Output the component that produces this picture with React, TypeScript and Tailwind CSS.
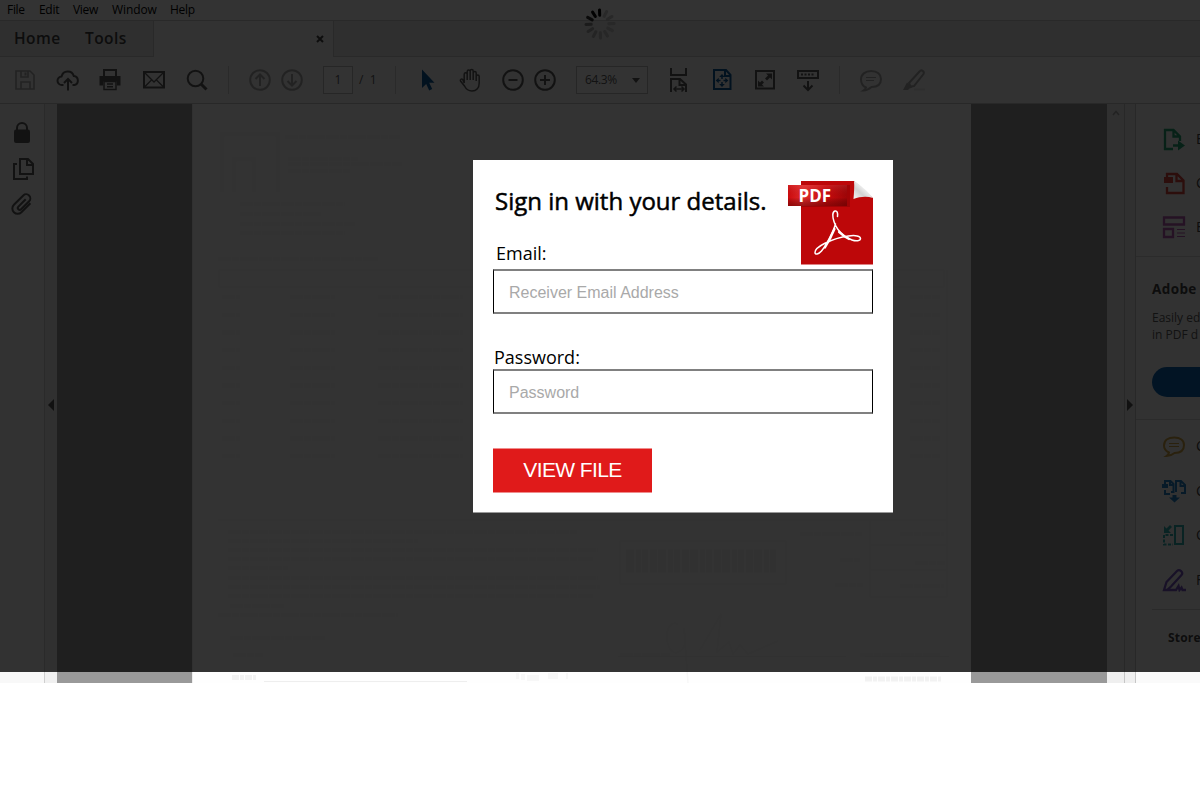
import React from "react";

type IconProps = { children: React.ReactNode; className?: string; size?: number };

function Icon({ children, className = "", size = 24 }: IconProps) {
  return (
    <svg
      width={size}
      height={size}
      viewBox="0 0 24 24"
      fill="none"
      stroke="currentColor"
      strokeWidth={2}
      className={`block shrink-0 ${className}`}
    >
      {children}
    </svg>
  );
}

function Divider() {
  return <div className="ml-[19px] h-[28px] w-px shrink-0 bg-[#cfcfcf]" />;
}

function MenuBar() {
  return (
    <div className="flex h-5 shrink-0 items-center bg-white pl-[7px] text-[12px] leading-5 tracking-[-0.3px] text-black">
      <span className="w-8">File</span>
      <span className="w-[34px]">Edit</span>
      <span className="w-[39px]">View</span>
      <span className="w-[58px] tracking-[-0.1px]">Window</span>
      <span>Help</span>
    </div>
  );
}

function TabBar() {
  return (
    <div className="flex h-[37px] shrink-0 border-t border-[#cdcdcd] bg-[#ebebeb] text-[15.500px] font-semibold text-[#444]">
      <div className="flex w-[154px] items-center border-r border-b border-[#cdcdcd] pl-[14px] tracking-[0.45px]">
        <span className="w-[71px]">Home</span>
        <span>Tools</span>
      </div>
      <div className="flex w-[180px] items-center justify-end border-r border-[#cdcdcd] bg-[#f8f8f8] pr-[9px] pb-px">
        <svg width="8" height="8" viewBox="0 0 8 8" stroke="#444" strokeWidth="2">
          <path d="M1 1l6 6M7 1L1 7" />
        </svg>
      </div>
      <div className="grow border-b border-[#cdcdcd]" />
    </div>
  );
}

function Toolbar() {
  return (
    <div className="flex h-[47px] shrink-0 items-center border-b border-[#c8c8c8] bg-[#f8f8f8] text-[#5c5c5c]">
      <Icon className="ml-[13px] text-[#aaa]">
        <path d="M3 3h14l4 4v14H3zM8 3v6h7V3M8 21v-7h9v7" strokeWidth="1.6" />
        <path d="M12.500 4.500v3" />
      </Icon>
      <Icon className="ml-[19px]">
        <path d="M7.500 17H6a4.300 4.300 0 0 1-.4-8.600A6.300 6.300 0 0 1 17.800 8a4.600 4.600 0 0 1 .7 9H16.500M12 22.500v-11M8 15l4-4 4 4" />
      </Icon>
      <Icon className="ml-[18px]">
        <path d="M6 8V2h12v6" />
        <path d="M1.500 8h21v9.500H19v-4H5v4H1.500z" fill="currentColor" stroke="none" />
        <path d="M6 13.500h12v8H6zM9 16h6M9 18.700h6" strokeWidth="1.500" />
      </Icon>
      <Icon className="ml-[20px]">
        <path d="M2 4h20v15.500H2z" />
        <path d="M2.500 4.500L12 14l9.500-9.500M2.500 19l7-7M21.500 19l-7-7" strokeWidth="1.300" />
      </Icon>
      <Icon className="ml-[19px]">
        <circle cx="10.500" cy="10.500" r="7.800" />
        <path d="M16 16l5.500 5.500" strokeWidth="3" />
      </Icon>
      <Divider />
      <Icon className="ml-[19px] text-[#aaa]">
        <circle cx="12" cy="12" r="9.800" />
        <path d="M12 18V7M7.500 11L12 6.500l4.500 4.500" />
      </Icon>
      <Icon className="ml-[8px] text-[#aaa]">
        <circle cx="12" cy="12" r="9.800" />
        <path d="M12 6v11M7.500 13l4.500 4.500 4.500-4.500" />
      </Icon>
      <div className="ml-[19px] flex h-7 w-[30px] shrink-0 items-center justify-center border border-[#bcbcbc] bg-white text-[12px]">
        1
      </div>
      <div className="ml-[6px] w-[18px] shrink-0 text-[12px] whitespace-pre">/  1</div>
      <div className="ml-[18px] h-7 w-px shrink-0 bg-[#cfcfcf]" />
      <Icon className="ml-[20px] text-[#0d5a9c]">
        <path d="M6 1.500v18.500l4.200-4 3 6.500 3-1.500-3-6.300h5.300z" fill="currentColor" stroke="none" />
      </Icon>
      <Icon className="ml-[18px]">
        <path
          d="M6.200 15V6.300a1.500 1.500 0 0 1 3 0V12 3.500a1.500 1.500 0 0 1 3 0V12 3a1.500 1.500 0 0 1 3 0v9V5a1.500 1.500 0 0 1 3 0v8-4.500a1.500 1.500 0 0 1 3 0V15c0 5-3 8-7.200 8-4 0-6-2-7.500-5l-4-5c-.8-1.500 1-2.500 2.200-1.500z"
          strokeWidth="1.500"
        />
      </Icon>
      <Icon className="ml-[19px]">
        <circle cx="12" cy="12" r="9.800" />
        <path d="M7.500 12h9" />
      </Icon>
      <Icon className="ml-[8px]">
        <circle cx="12" cy="12" r="9.800" />
        <path d="M7 12h10M12 7v10" />
      </Icon>
      <div className="ml-[19px] flex h-7 w-[72px] shrink-0 items-center justify-between border border-[#bcbcbc] bg-white pr-[7px] pl-[8px] text-[12px] tracking-[-0.4px]">
        64.3%
        <svg width="8" height="5" viewBox="0 0 8 5" fill="currentColor">
          <path d="M0 0h8L4 5z" />
        </svg>
      </div>
      <Icon className="ml-[18px]">
        <path d="M5 0v7h15V0M5 24V11h9l6 5.500V24M13.500 11v6H20" />
        <path d="M8 21h10M10.500 18.500L8 21l2.500 2.500M15.500 18.500L18 21l-2.500 2.500" strokeWidth="1.500" />
      </Icon>
      <Icon className="ml-[20px] text-[#0d5a9c]">
        <path d="M4 2h12l4.500 5v14H4zM15 2v6h5.500" />
        <path d="M12 8.500v2.500M12 14v2.500M8 12.500h2.500M13.500 12.500H16" strokeWidth="1.500" />
        <path d="M12 6l2.800 3H9.200zM12 19l2.800-3H9.200zM5.700 12.500l3-2.800v5.600zM18.300 12.500l-3-2.800v5.600z" fill="currentColor" stroke="none" />
      </Icon>
      <Icon className="ml-[19px]">
        <path d="M3 3h18v17.500H3z" />
        <path d="M13 5.500h6v6l-2-2-3 3-2-2 3-3zM11 18.500H5v-6l2 2 2-2 2 2-2 2z" fill="currentColor" stroke="none" />
      </Icon>
      <Icon className="ml-[19px]">
        <path d="M2 3h20v7H2z" />
        <path d="M5 6.500h14" strokeDasharray="2 1.500" />
        <path d="M12 13v9M7.500 17.500L12 22l4.500-4.500" />
      </Icon>
      <Divider />
      <Icon className="ml-[19px] text-[#aaa]">
        <path d="M7 19.500C3.700 18 2 15.500 2 11.500 2 6.500 6 3 12.200 3S22 6.500 22 11c0 5.500-4 8-9.500 8-3 2.500-5 3.500-8 3.500 1.500-1 2.200-1.500 2.500-3z" />
        <path d="M7 9.500h10M7 12.500h8" strokeWidth="1.200" />
      </Icon>
      <Icon className="ml-[19px] text-[#aaa]">
        <path d="M7 15L17.500 3.500c2-2.500 5.300 0 4 2.500L12 18l-3.500.5z" />
        <path d="M5 14.500l5.500 5-3 1L6 22H1z" fill="currentColor" stroke="none" />
        <path d="M12 21.500h11" strokeWidth="2" opacity=".25" />
      </Icon>
    </div>
  );
}

const lines = [
  [228, 532, 350], [228, 541, 190], [228, 550, 370], [228, 559, 365], [228, 568, 60],
  [228, 578, 370], [228, 587, 372], [228, 596, 365], [230, 606, 55], [218, 615, 180],
  [230, 638, 95], [233, 655, 30], [285, 137, 115], [288, 159, 70], [288, 164, 114],
  [288, 171, 62], [240, 204, 105], [240, 214, 82], [240, 224, 115], [240, 233, 105],
  [218, 259, 160], [800, 534, 62], [840, 560, 20], [835, 585, 28], [900, 534, 44],
  [915, 563, 30], [900, 586, 44], [620, 655, 50], [860, 655, 80],
];

function ScannedPage() {
  return (
    <div className="w-[779px] shrink-0 overflow-hidden border-l border-[#eee] bg-[#fefefe]">
      <svg width="778" height="579" viewBox="193 104 778 579" className="block">
        <g stroke="#f7f7f7" strokeWidth="4" strokeDasharray="13 1 7 1 18 1" fill="none">
          {lines.map(([x, y, w], i) => (
            <path key={i} d={`M${x} ${y}h${w}`} />
          ))}
          {Array.from({ length: 10 }, (_, i) => (
            <path key={i} d={`M222 ${297 + i * 17.700}h18M290 ${297 + i * 17.700}h45M378 ${297 + i * 17.700}h85M910 ${297 + i * 17.700}h30`} />
          ))}
        </g>
        <g stroke="#f8f8f8" fill="none">
          <path d="M219 270h725v17H219zM218 520h728M870 520v77h77V270M870 545h77M870 570h77M620 541h166v43H620z" />
          <path d="M222 192v-58h56v58M234 192v-33h20v33" strokeWidth="5" stroke="#fafafa" />
        </g>
        <path d="M626 561h152" stroke="#f5f5f5" strokeWidth="23" strokeDasharray="8 2 5 1 6 2 7 1" />
        <path d="M678 624c-14-6-15 27-2 29 14-5 8-19 8-25l4 55M700 650l21-36-4 38 12-10 4 12 7-9 8 9 30-13" stroke="#f7f7f7" strokeWidth="1.500" fill="none" />
        <path d="M618 656.500h228M865 656.500h84" stroke="#f5f5f5" />
        <path d="M264 681.500h203" stroke="#eee" />
        <path d="M232 677.500h24M865 679h76" stroke="#f2f2f2" strokeWidth="5" strokeDasharray="7 1 4 1" />
        <path d="M516 676h3M521 677h4M527 678h12M548 676h10M566 676h2" stroke="#f7f7f7" strokeWidth="6" />
      </svg>
    </div>
  );
}

function LeftRail() {
  return (
    <>
      <div className="flex w-[45px] shrink-0 flex-col border-r border-[#cfcfcf] bg-[#f8f8f8] pt-4 pl-[10px] text-[#5a5a5a]">
        <Icon>
          <path d="M7 12V8a5 5 0 0 1 10 0v4" />
          <rect x="4" y="9.500" width="16" height="13.500" rx="2" fill="currentColor" stroke="none" />
        </Icon>
        <Icon className="mt-[13px] ml-px">
          <path d="M9 2h8l5 5v10H9zM16 2v6h6M6 7H3v15h13v-2.500" />
        </Icon>
        <Icon className="mt-[11px]">
          <path d="M16.500 7.500l-7.300 7.300a1.900 1.900 0 0 0 2.700 2.700l8-8a4 4 0 0 0-5.800-5.800L4.700 13a5.300 5.300 0 0 0 7.500 7.500l9-9" transform="translate(-.8 -.2)" />
        </Icon>
      </div>
      <div className="flex w-3 shrink-0 bg-[#f0f0f0] pt-[295px] pl-[3px]">
        <svg width="6" height="12" viewBox="0 0 6 12" fill="#555">
          <path d="M6 0v12L0 6z" />
        </svg>
      </div>
    </>
  );
}

function ToolRow({ label, children, className }: { label: string; children: React.ReactNode; className: string }) {
  return (
    <div className={`flex h-6 shrink-0 items-center pl-[26px] ${className}`}>
      {children}
      <span className="ml-[10px] text-[14px] leading-6 text-[#444]">{label}</span>
    </div>
  );
}

function RightPanel() {
  return (
    <div className="flex w-[64px] shrink-0 flex-col overflow-hidden bg-[#fafafa] pt-[23px]">
      <ToolRow label="E" className="text-[#25a376]">
        <Icon>
          <path d="M11 22H3V3h8.500l6.500 6.500V14M11.500 3v6.500H18M11 18.500h7" strokeWidth="2.300" />
          <path d="M16 13.500l7 5-7 5z" fill="currentColor" stroke="none" />
        </Icon>
      </ToolRow>
      <ToolRow label="C" className="mt-5 text-[#d9453d]">
        <Icon>
          <path d="M5 10V3h10l6.500 6.500V22H5v-6M14.500 3v7h7" strokeWidth="2.300" />
          <path d="M2 6h9v6H2z" fill="currentColor" stroke="none" />
        </Icon>
      </ToolRow>
      <ToolRow label="E" className="mt-5 text-[#b85cb3]">
        <Icon>
          <path d="M2 2.500h20v7H2zM2 14h9v8H2z" strokeWidth="2.300" />
          <path d="M15 14.500h8M15 18h8M15 21.500h8" strokeWidth="1.200" />
        </Icon>
      </ToolRow>
      <div className="mt-[17px] h-px shrink-0 bg-[#d5d5d5]" />
      <div className="mt-[23px] pl-4 text-[13.500px] leading-[18px] font-bold tracking-[0.4px] text-[#444]">Adobe</div>
      <div className="mt-[11px] pl-4 text-[12px] leading-[17px] whitespace-nowrap text-[#5c5c5c]">
        Easily ed
        <br />
        in PDF d
      </div>
      <div className="mt-[24px] ml-4 h-[30px] shrink-0 rounded-l-full bg-[#0d66b4]" />
      <div className="mt-[22px] h-px shrink-0 bg-[#d5d5d5]" />
      <ToolRow label="C" className="mt-[14px] text-[#d0a545]">
        <Icon>
          <path d="M7 18.500C3.700 17 2 15 2 11.500 2 6.500 6 3.500 12.200 3.500S22 6.500 22 11c0 5.500-4 8-9.500 8-3 2.500-5 3-8 3 1.500-1 2.200-1.500 2.500-3.500z" />
          <path d="M7 9.500h10M7 12.500h10" strokeWidth="1" />
        </Icon>
      </ToolRow>
      <ToolRow label="C" className="mt-[21px] text-[#2683c6]">
        <Icon>
          <path d="M3 8V2h5.500l3 3v8H9M8 2v4h4M14 13V2h5l4 4v8h-4M18.500 2v5H23M3 11v4h5" />
          <path d="M10.500 16h4v2.500h3.500l-5.500 5-5.500-5h3.500zM0 5h6v4H0z" fill="currentColor" stroke="none" />
        </Icon>
      </ToolRow>
      <ToolRow label="O" className="mt-[20px] text-[#2eb0ad]">
        <Icon>
          <path d="M13 3h8v18h-8z" />
          <path d="M11 12H2v9.500h9" strokeDasharray="3 1.500" />
          <path d="M2 3v7h7L6.500 7.500 10 4 8 2 4.500 5.500z" fill="currentColor" stroke="none" />
        </Icon>
      </ToolRow>
      <ToolRow label="F" className="mt-[21px] text-[#7957c2]">
        <Icon>
          <path d="M2 22l2.500-8L15 3c2.500-2.500 7 1.500 4.500 4L9 18.500 5 22zM5 22h9l2.500-4 1 4 2-2.500 1 2.500H24" strokeWidth="2.300" />
        </Icon>
      </ToolRow>
      <div className="mt-[17px] ml-4 h-px shrink-0 bg-[#cfcfcf]" />
      <div className="mt-[19px] pl-8 text-[12px] leading-[18px] font-bold tracking-[0.2px] text-[#444]">Store</div>
    </div>
  );
}

function Viewer() {
  return (
    <div className="flex min-h-0 grow overflow-hidden">
      <LeftRail />
      <div className="w-[135px] shrink-0 bg-[#999]" />
      <ScannedPage />
      <div className="w-[136px] shrink-0 bg-[#999]" />
      <div className="flex w-[18px] shrink-0 justify-center border-r border-[#c6c6c6] bg-[#efefef] pt-[6px]">
        <svg width="8" height="6" viewBox="0 0 8 6" fill="none" stroke="#aaa" strokeWidth="1.500">
          <path d="M1 5l3-3.500L7 5" />
        </svg>
      </div>
      <div className="flex w-[11px] shrink-0 border-r border-[#c6c6c6] bg-[#efefef] pt-[295px] pl-[2px]">
        <svg width="6" height="12" viewBox="0 0 6 12" fill="#555" className="shrink-0">
          <path d="M0 0v12l6-6z" />
        </svg>
      </div>
      <RightPanel />
    </div>
  );
}

const petals = ["#000000", "#292929", "#282828", "#282828", "#282828", "#272727", "#262626", "#242424", "#222222", "#1b1b1b", "#0a0a0a", "#020202"];

function Spinner() {
  return (
    <svg width="32" height="32" viewBox="-16 -16 32 32" className="absolute top-[8px] left-[584px]">
      {petals.map((color, i) => (
        <path key={i} d="M0 -8.800V-14" stroke={color} strokeWidth="3" strokeLinecap="round" transform={`rotate(${i * 30 - 2})`} />
      ))}
    </svg>
  );
}

function PdfLogo() {
  return (
    <svg width="85" height="84" viewBox="0 0 85 84" className="block shrink-0">
      <defs>
        <linearGradient id="ribbon" x1="0" x2="1" y1="0" y2="0">
          <stop offset="0" stopColor="#cc0a0c" />
          <stop offset=".25" stopColor="#e02a2a" />
          <stop offset=".65" stopColor="#c80b0d" />
          <stop offset="1" stopColor="#9e0507" />
        </linearGradient>
        <linearGradient id="shade" x1="0" x2="0" y1="0" y2="1">
          <stop offset="0" stopColor="#fff" stopOpacity=".08" />
          <stop offset=".6" stopColor="#000" stopOpacity="0" />
          <stop offset="1" stopColor="#500" stopOpacity=".5" />
        </linearGradient>
        <linearGradient id="curl" x1="0" x2="1" y1="1" y2="0">
          <stop offset="0" stopColor="#f6f6f6" />
          <stop offset=".35" stopColor="#d2d2d2" />
          <stop offset=".6" stopColor="#f2f2f2" />
          <stop offset="1" stopColor="#ddd" />
        </linearGradient>
      </defs>
      <path d="M13 0h53l19 17v66.500H13z" fill="#bd0709" />
      <path d="M66 0c6 4 14 10 19 17-6-2-13-1.500-19.500 1C66 12 66.500 5 66 0z" fill="url(#curl)" />
      <path d="M13 4h49v22H13z" fill="#8d0305" opacity=".6" />
      <path d="M0 4h59v21H0z" fill="url(#ribbon)" />
      <path d="M0 4h59v21H0z" fill="url(#shade)" />
      <text x="10.500" y="21" fill="#fff" fontFamily="Open Sans" fontWeight="700" fontSize="17.500" textLength="32.500" lengthAdjust="spacingAndGlyphs">
        PDF
      </text>
      <g fill="none" stroke="#fff" strokeLinecap="round" strokeLinejoin="round">
        <path d="M49.500 35.500c.5-4-.5-6-2.500-5.500-3 .8-2.500 6-1 10.500.8 3 2 5.500 4 8 3.500 4.500 9 8.500 14 10.500 4 1.500 8.500 1 8.500-1.500 0-2.500-5-3.500-12-2.500-8 1-17 4-24 7.500-6 3-9.500 6.500-9.500 9 0 2.500 3.500 2 6.500-1.500 5-6 12-20 14-27" strokeWidth="1.500" />
        <path d="M46.500 48c-2.500 6-6 13-9.500 18.500M51 51c3 3 7 5.500 10 7" strokeWidth="2.200" />
      </g>
    </svg>
  );
}

function SignIn() {
  return (
    <form
      className="absolute top-[160px] left-[473px] flex h-[353px] w-[420px] flex-col border-b border-[#999] bg-white px-5 text-black"
      onSubmit={(e) => e.preventDefault()}
    >
      <div className="flex h-[109px] shrink-0 justify-between pt-[21px]">
        <div className="flex flex-col">
          <h1 className="pl-[2px] text-[24px] leading-[40px] whitespace-nowrap [-webkit-text-stroke:0.5px_black]">
            Sign in with your details.
          </h1>
          <label htmlFor="email" className="mt-[20px] pl-[3px] text-[18px] leading-6">
            Email:
          </label>
        </div>
        <PdfLogo />
      </div>
      <input
        id="email"
        placeholder="Receiver Email Address"
        className="block h-[45px] w-full shrink-0 border-x border-y-2 border-x-black border-y-[#808080] bg-white px-[15px] pt-[2px] font-['Liberation_Sans',sans-serif] text-[16px] outline-none placeholder:text-[#a9a9a9]"
      />
      <label htmlFor="password" className="mt-[31px] pl-px text-[18px] leading-6">
        Password:
      </label>
      <input
        id="password"
        type="password"
        placeholder="Password"
        className="block h-[45px] w-full shrink-0 border-x border-y-2 border-x-black border-y-[#808080] bg-white px-[15px] pt-[2px] font-['Liberation_Sans',sans-serif] text-[16px] outline-none placeholder:text-[#a9a9a9]"
      />
      <button className="mt-[34px] h-[45px] w-[159px] shrink-0 border-y border-[#ef8c8c] bg-[#e01a1a] pb-px font-['Liberation_Sans',sans-serif] text-[21px] tracking-[-0.6px] text-white">
        VIEW FILE
      </button>
    </form>
  );
}

export default function App() {
  return (
    <div className="relative h-[800px] w-[1200px] overflow-hidden bg-white font-['Open_Sans','Noto_Sans',sans-serif]">
      <div className="flex h-[683px] flex-col">
        <MenuBar />
        <TabBar />
        <Toolbar />
        <Viewer />
      </div>
      <div className="absolute top-0 left-0 h-[672px] w-full bg-black/80" />
      <Spinner />
      <SignIn />
    </div>
  );
}
